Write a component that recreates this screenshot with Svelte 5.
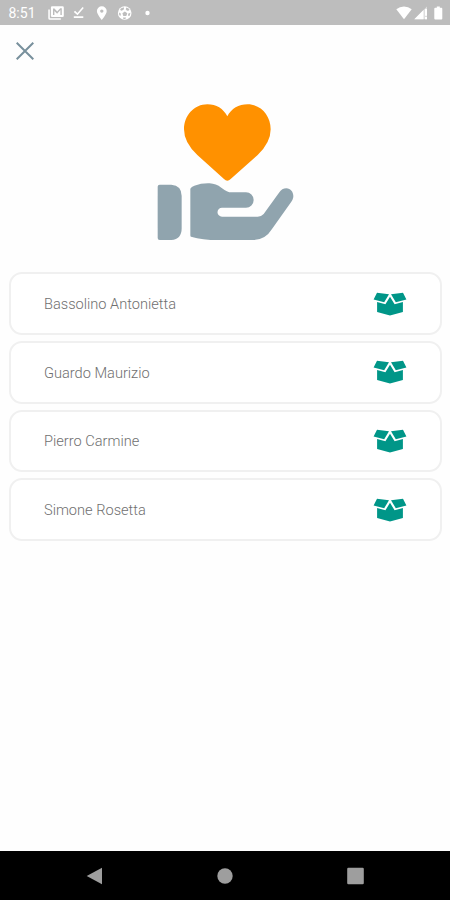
<script>
  let people = [
    'Bassolino Antonietta',
    'Guardo Maurizio',
    'Pierro Carmine',
    'Simone Rosetta',
  ];
</script>

<div class="screen">
  <header class="status">
    <span class="time">8:51</span>
    <svg class="notifications" width="104" height="16" viewBox="0 0 104 16" fill="#fff">
      <!-- news -->
      <path d="M0.3 4.5h1.5v8.7h11v1.5H1.8A1.5 1.5 0 0 1 .3 13.2z" />
      <path fill-rule="evenodd" d="M4.2 1.3h10.3a1.3 1.3 0 0 1 1.3 1.3v8.2a1.3 1.3 0 0 1-1.3 1.3H4.2a1.3 1.3 0 0 1-1.3-1.3V2.6a1.3 1.3 0 0 1 1.3-1.3zM5 3.5V10h1.4V6l2.7 2.7L12.4 5v5h1.4V3.2h-1.6L9.2 6.5 6.5 3.5z" />
      <!-- download done -->
      <path d="M25.8 7l1.3-1.2 2.3 2.1L34.6 2l1.2 1.1-6.3 7.2zM25.8 11.3h9.5v1.6h-9.5z" />
      <!-- location -->
      <path fill-rule="evenodd" d="M53.8 1.2a4.9 4.9 0 0 0-4.9 4.9c0 3.5 4.9 8.9 4.9 8.9s4.9-5.4 4.9-8.9a4.9 4.9 0 0 0-4.9-4.9zm0 3.2a1.7 1.7 0 1 1 0 3.4 1.7 1.7 0 0 1 0-3.4z" />
      <!-- ball -->
      <circle cx="76.7" cy="8" r="6.8" />
      <path fill="#bdbdbd" d="M72.8 3.5l3-1.2.2 2-2.2 1.5-1.7-.7zM78.4 2.5l3 1.6-.4 1.5-2 .2-1.3-1.6zM76.8 6.5l2.5 1.8-1 2.8h-3l-.9-2.8zM71 7.5l1.8 1-.1 2.3-1.4-.5zM82.4 7.8l-.7 3-1.4.2-.2-2.2zM75 12.5h3l-.6 1.4h-2z" />
      <circle cx="99.5" cy="8" r="2.2" />
    </svg>
    <svg class="signals" width="48" height="16" viewBox="0 0 48 16" fill="#fff">
      <path d="M.3 4.2Q3.7 1.4 8 1.4t7.7 2.8L8 14.2z" />
      <path opacity=".5" d="M31 1.6v12.7H18.3z" />
      <path d="M27.5 5.1v9.2h-9.2zM29 4h2v6.8h-2zM29 12.1h2v2.2h-2z" />
      <path d="M40.8 1.4h3v1.4h1.6a.9.9 0 0 1 .9.9v9.8a.9.9 0 0 1-.9.9h-6.2a.9.9 0 0 1-.9-.9V3.7a.9.9 0 0 1 .9-.9h1.6z" />
    </svg>
  </header>

  <button class="close" aria-label="Chiudi">
    <svg width="18" height="18" viewBox="0 0 18 18" fill="none" stroke="#78909c" stroke-width="2">
      <path d="M.7.7l16.6 16.6M17.3.7L.7 17.3" />
    </svg>
  </button>

  <svg class="hero" width="160" height="160" viewBox="0 0 480 480">
    <path
      fill="#ff9100"
      d="M247 272q-5 0-10-5l-80-72q-40-37-40-77c0-42 31-75 70-75 27 0 48 13 60 36 12-23 34-36 61-36 39 0 69 33 69 75q0 40-39 77l-81 72q-5 5-10 5z"
    />
    <g fill="#90a4ae">
      <path d="M44 284H79q31 2 31 34v96q0 34-31 36H44q-6 0-6-6V290q0-6 6-6z" />
      <path d="M136 296q3-6 12-9 22-8 46-7 19 1 35 13 18 14 30 14h44a23 23 0 0 1 0 46h-72a13 13 0 0 0 0 27h107q11 0 18-8l46-64q9-13 22-13c16 0 24 17 20 30q-1 5-5 10l-58 82q-20 33-57 33H218q-45 0-80-10-2 0-2-4z" />
    </g>
  </svg>

  <ul class="list">
    {#each people as person}
      <li class="card">
        <span>{person}</span>
        <svg width="34" height="24" viewBox="0 0 34 24" fill="#009688">
          <path d="M4 .8L16 2.2 11.2 10.3.6 7.4zM30 .8L18 2.2l4.8 8.1L33.4 7.4z" />
          <path d="M4.1 10l8.3 2.3L17 4.8l4.6 7.5 8.3-2.3v9.9L17 23.4 4.1 19.9z" />
        </svg>
      </li>
    {/each}
  </ul>

  <nav class="navbar">
    <svg width="17" height="18" viewBox="0 0 17 18"><path d="M16 .7v16.6L.7 9z" /></svg>
    <svg width="16" height="18" viewBox="0 0 16 18"><circle cx="8" cy="9" r="7.7" /></svg>
    <svg width="17" height="18" viewBox="0 0 17 18"><rect x=".2" y=".7" width="16.6" height="16.6" rx="1.2" /></svg>
  </nav>
</div>

<style>
  :global(body) {
    margin: 0;
    background: #fff;
  }

  .screen {
    display: flex;
    flex-direction: column;
    width: 450px;
    height: 900px;
    background: #fefefe;
    font-family: Roboto, sans-serif;
  }

  svg {
    display: block;
    flex: none;
  }

  .status {
    display: flex;
    align-items: center;
    box-sizing: border-box;
    height: 25px;
    padding: 1px 6px 0 8.5px;
    background: #bdbdbd;
    color: #fff;
  }

  .time {
    width: 39.5px;
    font-size: 14px;
  }

  .signals {
    margin-left: auto;
  }

  .close {
    align-self: flex-start;
    margin: 16.5px 0 0 16px;
    padding: 0;
    border: none;
    background: none;
  }

  .hero {
    margin: 30.5px 0 0 145px;
  }

  .list {
    display: flex;
    flex-direction: column;
    gap: 6.2px;
    margin: 22.4px 8px 0 9px;
    padding: 0;
    list-style: none;
  }

  .card {
    display: flex;
    align-items: center;
    justify-content: space-between;
    box-sizing: border-box;
    height: 62.5px;
    padding: 0 33.5px 0 33px;
    border: 2px solid #f0f0f0;
    border-radius: 13px;
    background: #fff;
    color: #707070;
    font-size: 14.6px;
    font-weight: 300;
  }

  .card span {
    padding-top: 0.6px;
  }

  .navbar {
    display: flex;
    align-items: center;
    justify-content: space-between;
    box-sizing: border-box;
    height: 49px;
    margin-top: auto;
    padding: 0 86px;
    background: #000;
    fill: #9e9e9e;
  }
</style>
